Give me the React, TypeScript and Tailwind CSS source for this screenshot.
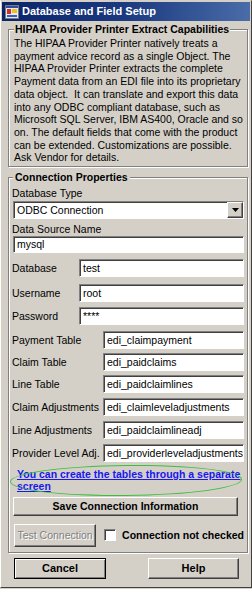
import React from 'react';

const FONT = { fontFamily: '"Liberation Sans", Arial, sans-serif' };

const sunken =
  'bg-white border border-t-[#808080] border-l-[#808080] border-b-white border-r-white shadow-[inset_1px_1px_0_#404040,1px_1px_0_#d4d0c8]';

const raised =
  'bg-[#d4d0c8] border border-t-white border-l-white border-b-[#404040] border-r-[#404040] shadow-[inset_-1px_-1px_0_#808080]';

const DESCRIPTION = [
  'The HIPAA Provider Printer natively treats a',
  'payment advice record as a single Object. The',
  'HIPAA Provider Printer extracts the complete',
  'Payment data from an EDI file into its proprietary',
  'data object.  It can translate and export this data',
  'into any ODBC compliant database, such as',
  'Microsoft SQL Server, IBM AS400, Oracle and so',
  'on. The default fields that come with the product',
  'can be extended. Customizations are possible.',
  'Ask Vendor for details.',
];

const FIELDS = [
  { label: 'Database', value: 'test', labelW: 'w-[67px]', mt: 'mt-[6px]' },
  { label: 'Username', value: 'root', labelW: 'w-[67px]', mt: 'mt-[7px]' },
  { label: 'Password', value: '****', labelW: 'w-[67px]', mt: 'mt-[5px]' },
  { label: 'Payment Table', value: 'edi_claimpayment', labelW: 'w-[91px]', mt: 'mt-[6px]' },
  { label: 'Claim Table', value: 'edi_paidclaims', labelW: 'w-[91px]', mt: 'mt-[4px]' },
  { label: 'Line Table', value: 'edi_paidclaimlines', labelW: 'w-[91px]', mt: 'mt-[4px]' },
  { label: 'Claim Adjustments', value: 'edi_claimleveladjustments', labelW: 'w-[91px]', mt: 'mt-[5px]' },
  { label: 'Line Adjustments', value: 'edi_paidclaimlineadj', labelW: 'w-[91px]', mt: 'mt-[5px]' },
  { label: 'Provider Level Adj.', value: 'edi_providerleveladjustments', labelW: 'w-[91px]', mt: 'mt-[5px]' },
];

function AppIcon() {
  return (
    <svg width="14" height="14" viewBox="0 0 14 14" className="shrink-0">
      <rect x="0.5" y="0.5" width="13" height="13" fill="#e8e8e8" stroke="#7a7a7a" />
      <rect x="1" y="1" width="12" height="2" fill="#2a4fa0" />
      <rect x="2" y="4" width="4" height="5" fill="#d03030" />
      <rect x="7" y="4" width="5" height="4" fill="#f0c020" />
      <rect x="2" y="10" width="10" height="2" fill="#3060c0" />
    </svg>
  );
}

function Field({ label, value, labelW, mt }: (typeof FIELDS)[number]) {
  return (
    <div className={`flex items-center h-[18px] ${mt}`}>
      <span className={`${labelW} shrink-0 whitespace-nowrap -ml-px`}>{label}</span>
      <div className={`${sunken} flex-1 min-w-0 h-[18px] flex items-center pl-[3px] overflow-hidden whitespace-nowrap`}>
        {value}
      </div>
    </div>
  );
}

export default function App() {
  return (
    <div
      className="w-[252px] h-[589px] bg-[#d4d0c8] text-black text-[10.5px] leading-[13px] overflow-hidden"
      style={FONT}
    >
      <div className="h-[588px] border border-t-[#d4d0c8] border-l-white border-r-[#404040] border-b-[#404040] px-px pt-px flex flex-col">
        {/* title bar */}
        <div className="h-[19px] flex items-center gap-[3px] pl-[3px] bg-gradient-to-r from-[#0a246a] via-[#1c3a80] to-[#4a6ca8]">
          <AppIcon />
          <span className="text-white font-bold text-[11px] whitespace-nowrap">Database and Field Setup</span>
        </div>

        <div className="flex flex-col pl-[6px] pr-[2px] min-w-0">
          {/* capabilities group */}
          <fieldset className="min-w-0 mt-[2px] border border-[#808080] shadow-[inset_1px_1px_0_#fff,1px_1px_0_#fff] pl-[5px] pr-[4px] pb-[2px]">
            <legend className="px-[1px] font-bold bg-[#d4d0c8] leading-[13px] whitespace-nowrap">
              HIPAA Provider Printer Extract Capabilities
            </legend>
            <div className="pt-[1px] leading-[12.7px] whitespace-pre">
              {DESCRIPTION.map((line) => (
                <div key={line}>{line}</div>
              ))}
            </div>
          </fieldset>

          {/* connection group */}
          <fieldset className="min-w-0 mt-[4px] border border-[#808080] shadow-[inset_1px_1px_0_#fff,1px_1px_0_#fff] pl-[4px] pr-[3px] pb-[5px]">
            <legend className="px-[2px] font-bold bg-[#d4d0c8] leading-[13px] whitespace-nowrap">
              Connection Properties
            </legend>

            <div className="pt-[3px] -ml-px">Database Type</div>
            <div className={`${sunken} h-[18px] mt-px flex items-center justify-between`}>
              <span className="pl-[3px]">ODBC Connection</span>
              <div className={`${raised} w-[16px] h-[16px] flex items-center justify-center`}>
                <svg width="7" height="4" viewBox="0 0 7 4">
                  <path d="M0 0h7L3.5 4z" fill="#000" />
                </svg>
              </div>
            </div>

            <div className="mt-[4px] -ml-px">Data Source Name</div>
            <div className={`${sunken} h-[17px] flex items-center pl-[3px]`}>mysql</div>

            {FIELDS.map((f) => (
              <Field key={f.label} {...f} />
            ))}

            <div className="relative mt-[6px] pl-[4px] pr-[8px] font-bold text-[#1818f0] underline leading-[12.4px]">
              <div className="whitespace-nowrap">You can create the tables through a separate</div>
              <div>screen</div>
              <div className="absolute -left-[3px] right-[2px] -top-[3px] -bottom-[3px] rounded-[50%] border-[1.5px] border-[#3cc03c] rotate-[-0.6deg]" />
            </div>

            <button
              className={`${raised} mt-[4px] w-[225px] h-[19px] font-bold text-center leading-[15px]`}
              style={FONT}
            >
              Save Connection Information
            </button>

            <div className="mt-[8px] flex items-center">
              <button
                disabled
                className={`${raised} ml-px w-[92px] h-[23px] text-[#808080] [text-shadow:1px_1px_0_#fff]`}
                style={FONT}
              >
                Test Connection
              </button>
              <div className={`${sunken} ml-[8px] w-[12px] h-[12px] shrink-0`} />
              <span className="ml-[6px] font-bold whitespace-nowrap">Connection not checked</span>
            </div>
          </fieldset>

          {/* bottom buttons */}
          <div className="mt-[5px] flex justify-between pl-[6px] pr-[9px]">
            <button
              className="w-[92px] h-[21px] bg-[#d4d0c8] border border-black shadow-[inset_1px_1px_0_#fff,inset_-1px_-1px_0_#808080] font-bold text-[11px]"
              style={FONT}
            >
              Cancel
            </button>
            <button
              className={`${raised} w-[91px] h-[21px] font-bold text-[11px]`}
              style={FONT}
            >
              Help
            </button>
          </div>
        </div>
      </div>
    </div>
  );
}
